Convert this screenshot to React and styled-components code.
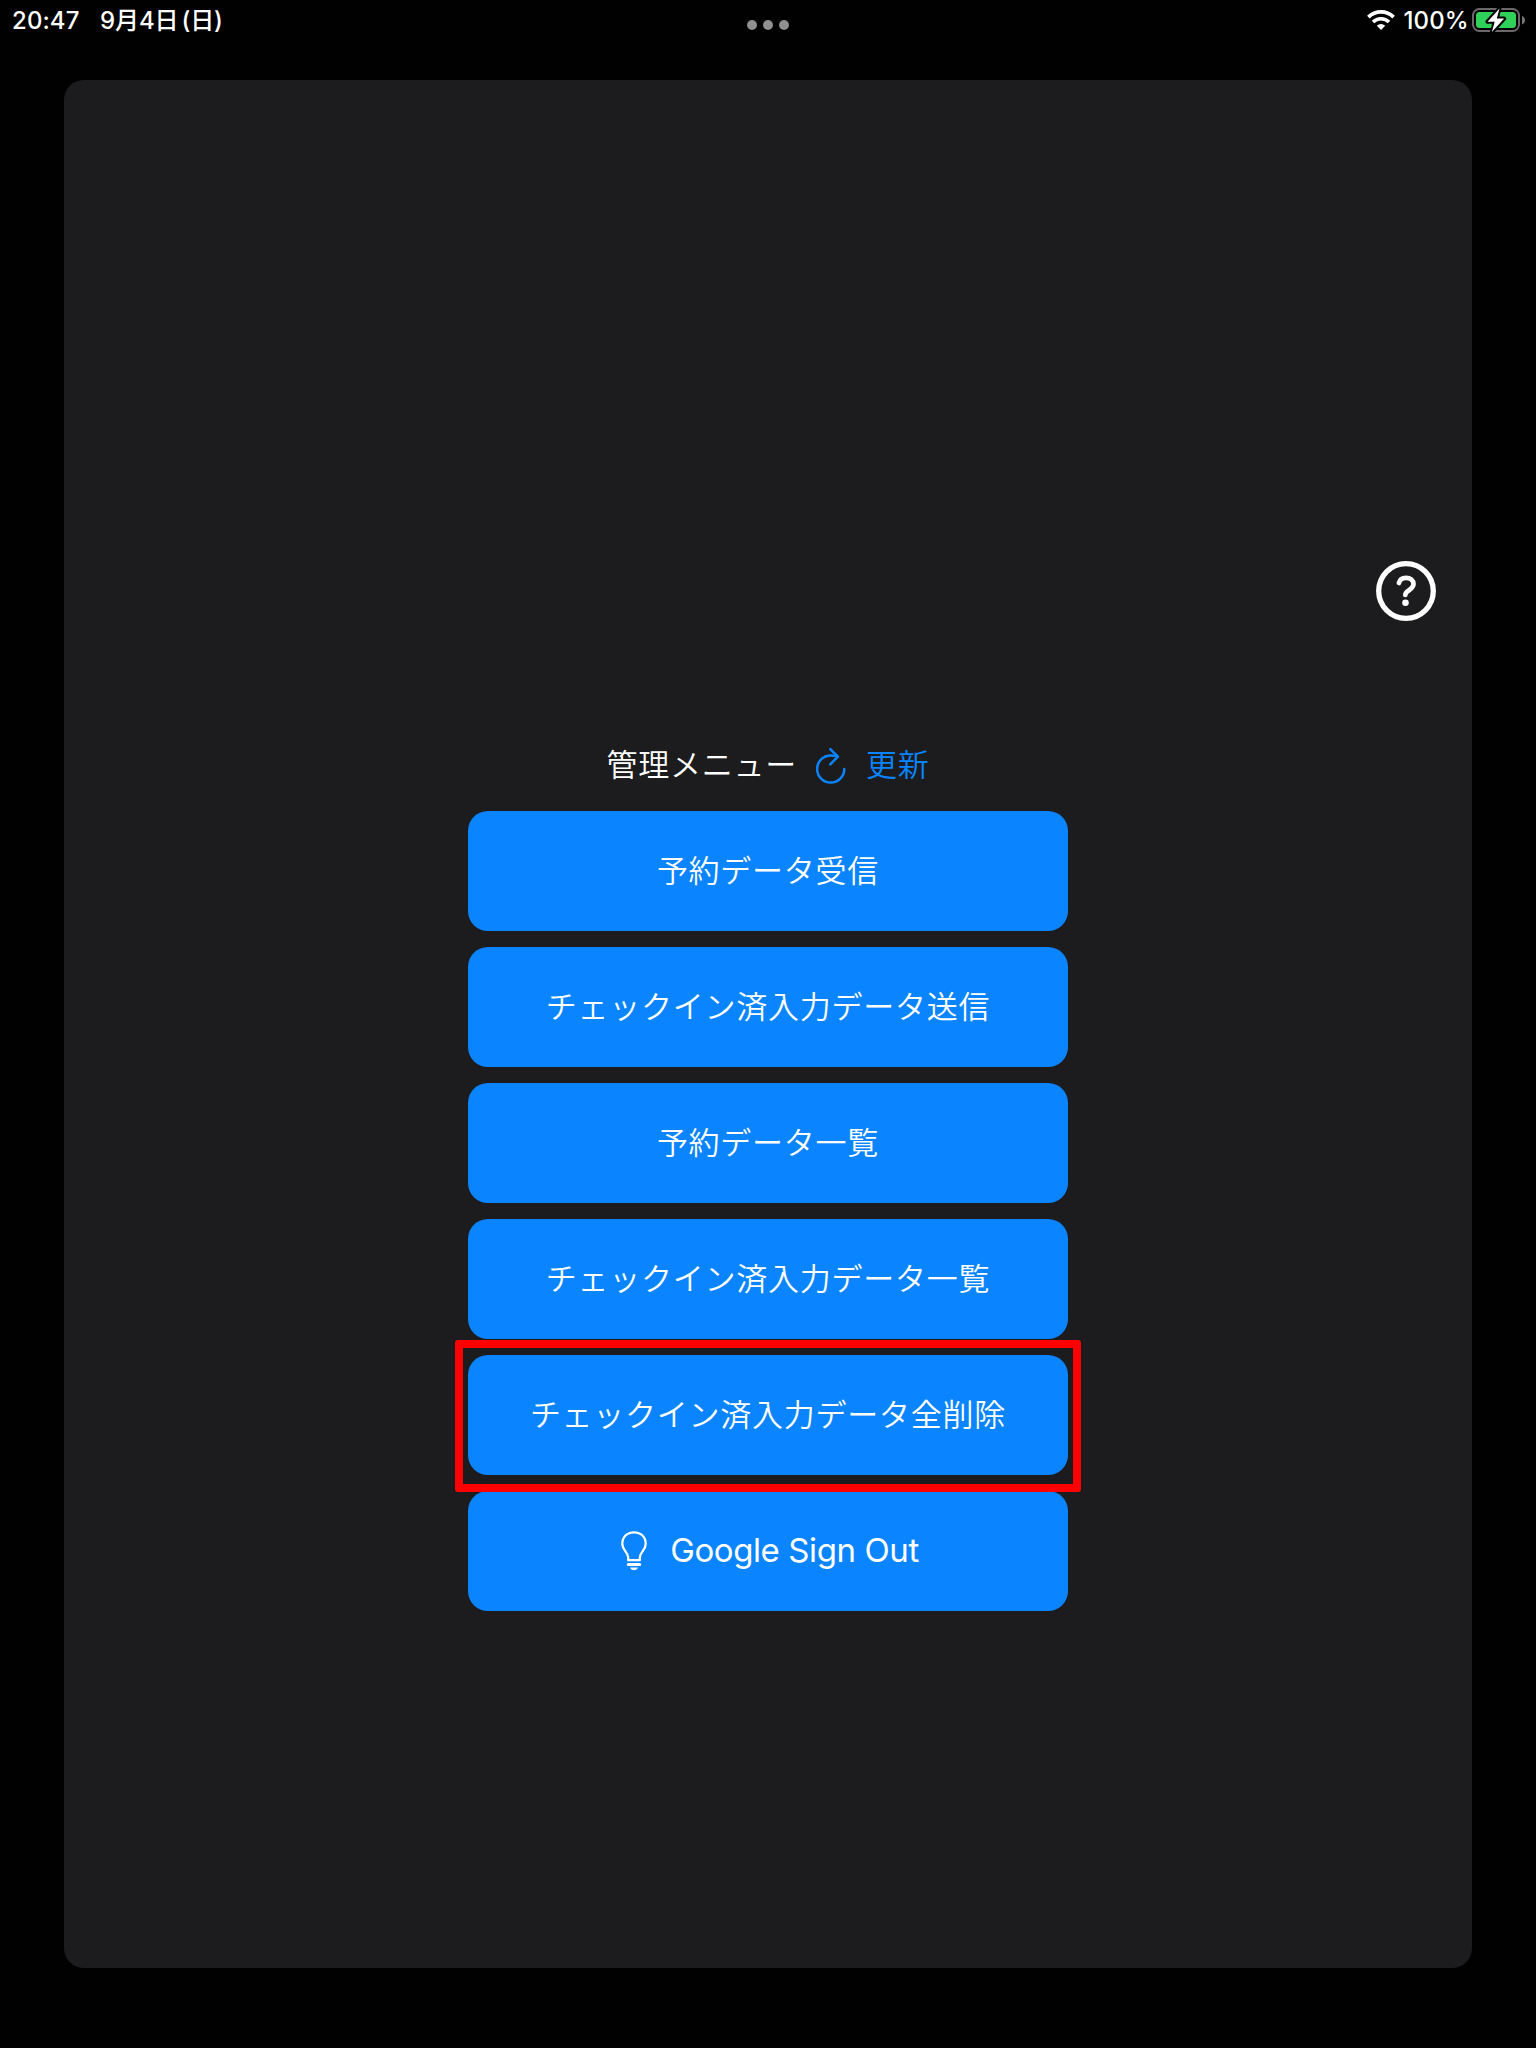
import React from "react";
import styled, { createGlobalStyle } from "styled-components";

const GlobalStyle = createGlobalStyle`
  html, body {
    margin: 0;
    background: #000100;
  }
  * {
    box-sizing: border-box;
  }
  button {
    border: 0;
    padding: 0;
    background: none;
    font: inherit;
    color: inherit;
  }
`;

const Screen = styled.div`
  width: 1536px;
  height: 2048px;
  display: flex;
  flex-direction: column;
  background: #000100;
  color: #fff;
  font-family: Inter, "Noto Sans CJK JP", sans-serif;
`;

const StatusBar = styled.header`
  height: 80px;
  flex: none;
  display: grid;
  grid-template-columns: 1fr auto 1fr;
  align-items: start;
  padding: 0 10px;
  font-size: 24px;
  line-height: 40px;
`;

const StatusLeft = styled.div`
  display: flex;
  gap: 20px;
  padding: 1px 0 0 2px;
  font-weight: 500;
  white-space: nowrap;
`;

const Time = styled.span`
  width: 68px;
  letter-spacing: 0.1px;
`;

const DateText = styled.span`
  letter-spacing: -0.1px;
`;

const Weekday = styled.span`
  margin-left: 3px;
`;

const Dots = styled.div`
  display: flex;
  gap: 6px;
  padding-top: 20px;
`;

const Dot = styled.span`
  width: 10px;
  height: 10px;
  border-radius: 50%;
  background: #8e908d;
`;

const StatusRight = styled.div`
  display: flex;
  justify-content: flex-end;
  align-items: center;
  height: 40px;
  font-weight: 450;
`;

const Percent = styled.span`
  width: 77px;
  padding: 1px 0 0 8.500px;
  letter-spacing: 0.1px;
  white-space: nowrap;
`;

const Card = styled.main`
  width: 1408px;
  height: 1888px;
  margin: 0 auto;
  border-radius: 20px;
  background: #1c1c1e;
  display: flex;
  flex-direction: column;
`;

const HelpRow = styled.div`
  display: flex;
  justify-content: flex-end;
  padding: 481px 36px 0 0;
`;

const HelpButton = styled.button`
  width: 60px;
  height: 60px;
  display: block;
`;

const TitleRow = styled.div`
  height: 48px;
  margin: 120px 0 22px;
  display: flex;
  justify-content: center;
  align-items: center;
`;

const Label = styled.span`
  padding-bottom: 5px;
  font-family: "Noto Sans CJK JP", sans-serif;
  font-size: 31px;
  font-weight: 350;
  letter-spacing: 0.75px;
  line-height: 44px;
  white-space: nowrap;
`;

const Refresh = styled.button`
  display: flex;
  align-items: center;
  gap: 20px;
  margin-left: 19px;
  color: #0a84ff;
`;

const Menu = styled.nav`
  width: 600px;
  margin: 0 auto;
  display: flex;
  flex-direction: column;
  gap: 16px;
`;

const MenuButton = styled.button`
  position: relative;
  height: 120px;
  border-radius: 20px;
  background: #0a84ff;
  display: flex;
  justify-content: center;
  align-items: center;
`;

const Highlight = styled.span`
  position: absolute;
  z-index: 1;
  top: -15px;
  left: -13px;
  right: -13px;
  bottom: -17px;
  border: 8px solid #ff0000;
  border-radius: 3px;
`;

const SignOut = styled.span`
  display: flex;
  align-items: center;
  gap: 23px;
  padding-left: 4px;
`;

const SignOutText = styled.span`
  padding-bottom: 2px;
  font-size: 33px;
  font-weight: 380;
  letter-spacing: -0.4px;
  line-height: 40px;
`;

const WifiIcon = () => (
  <svg width="28" height="20" viewBox="0 0 28 20" fill="none" stroke="#fff">
    <path d="M1.4 7.1a18 18 0 0 1 25.2 0" strokeWidth="3.8" />
    <path d="M6 12a11.4 11.4 0 0 1 16 0" strokeWidth="3.6" />
    <path d="M14 20l-4.2-4.3a6 6 0 0 1 8.4 0z" fill="#fff" stroke="none" />
  </svg>
);

const BatteryIcon = () => (
  <svg width="54" height="26" viewBox="0 0 54 26">
    <rect x="1" y="2" width="46" height="22" rx="6.5" fill="none" stroke="#6a6a6a" strokeWidth="2" />
    <path d="M50 9c4 1.5 4 7 0 8.500z" fill="#777" />
    <rect x="4" y="5" width="40" height="16" rx="3.5" fill="#30d158" />
    <path
      d="M27.500 1.500 15.500 14.700h7.200l-2.800 10.300 12.300-13.400h-7.400z"
      fill="#fff"
      stroke="#000"
      strokeWidth="4"
      strokeLinejoin="round"
      paintOrder="stroke"
    />
  </svg>
);

const HelpIcon = () => (
  <svg width="60" height="60" viewBox="0 0 60 60" fill="none" stroke="#fff" strokeLinecap="round">
    <circle cx="30" cy="30" r="27.300" strokeWidth="5.300" />
    <path d="M22.900 22c.8-3.600 3.500-5.200 7.100-5.200 4.400 0 7.500 2.500 7.500 6.300 0 6-8.200 6.100-8.200 10.900" strokeWidth="4.700" />
    <circle cx="29.500" cy="41.800" r="3.300" fill="#fff" stroke="none" />
  </svg>
);

const RefreshIcon = () => (
  <svg
    width="30"
    height="38"
    viewBox="0 0 30 38"
    fill="none"
    stroke="currentColor"
    strokeWidth="2.500"
    strokeLinecap="round"
    strokeLinejoin="round"
  >
    <path d="M28.300 23A13.600 13.600 0 1 1 14.700 9.400c2.500 0 4.500.3 6.600 1" />
    <path d="M14.300 3.200 21.900 10.700 14.300 18.300" />
  </svg>
);

const BulbIcon = () => (
  <svg width="26" height="40" viewBox="0 0 26 40" fill="none" stroke="#fff" strokeLinecap="round" strokeLinejoin="round">
    <path
      d="M7.200 29.200V26.500C7.200 21 1.300 19.500 1.300 13 1.300 6 6 1.300 13 1.300S24.700 6 24.700 13c0 6.500-5.900 8-5.900 13.500v2.700z"
      strokeWidth="2.300"
    />
    <path d="M7.300 33.500h11.400" strokeWidth="3" />
    <path d="M9 36.500h8c-.8 1.700-2.200 2.700-4 2.700s-3.200-1-4-2.700z" fill="#fff" stroke="none" />
  </svg>
);

const items = [
  { text: "予約データ受信" },
  { text: "チェックイン済入力データ送信" },
  { text: "予約データ一覧" },
  { text: "チェックイン済入力データ一覧" },
  { text: "チェックイン済入力データ全削除", highlighted: true },
];

export default function App() {
  return (
    <>
      <GlobalStyle />
      <Screen>
        <StatusBar>
          <StatusLeft>
            <Time>20:47</Time>
            <DateText>
              9月4日<Weekday>(日)</Weekday>
            </DateText>
          </StatusLeft>
          <Dots>
            <Dot />
            <Dot />
            <Dot />
          </Dots>
          <StatusRight>
            <WifiIcon />
            <Percent>100%</Percent>
            <BatteryIcon />
          </StatusRight>
        </StatusBar>
        <Card>
          <HelpRow>
            <HelpButton aria-label="ヘルプ">
              <HelpIcon />
            </HelpButton>
          </HelpRow>
          <TitleRow>
            <Label>管理メニュー</Label>
            <Refresh>
              <RefreshIcon />
              <Label>更新</Label>
            </Refresh>
          </TitleRow>
          <Menu>
            {items.map((item) => (
              <MenuButton key={item.text}>
                <Label>{item.text}</Label>
                {item.highlighted && <Highlight />}
              </MenuButton>
            ))}
            <MenuButton>
              <SignOut>
                <BulbIcon />
                <SignOutText>Google Sign Out</SignOutText>
              </SignOut>
            </MenuButton>
          </Menu>
        </Card>
      </Screen>
    </>
  );
}
